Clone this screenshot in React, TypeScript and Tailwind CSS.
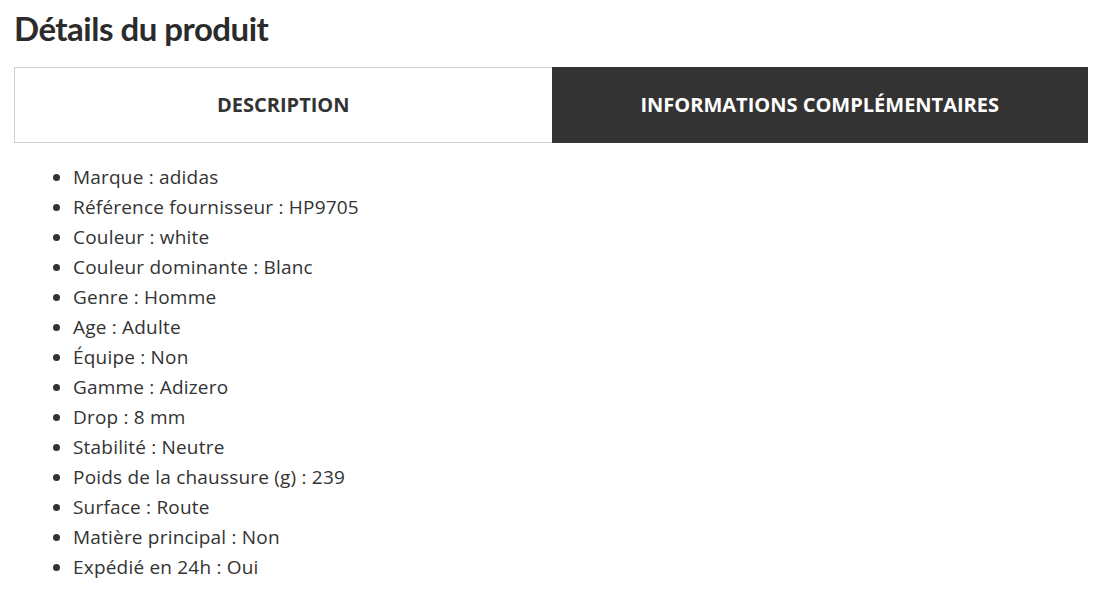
import React from "react";

const items = [
  "Marque : adidas",
  "Référence fournisseur : HP9705",
  "Couleur : white",
  "Couleur dominante : Blanc",
  "Genre : Homme",
  "Age : Adulte",
  "Équipe : Non",
  "Gamme : Adizero",
  "Drop : 8 mm",
  "Stabilité : Neutre",
  "Poids de la chaussure (g) : 239",
  "Surface : Route",
  "Matière principal : Non",
  "Expédié en 24h : Oui",
];

export default function App() {
  return (
    <div className="min-h-[591px] bg-white px-[14px] pt-[6px] text-[#333]">
      <h1 className="text-[33px] font-bold leading-[44px] tracking-[-0.5px] text-[#2b2b2b] font-['Lato',sans-serif]">Détails du produit</h1>
      <div className="mt-[17px] flex h-[76px] w-[1074px] font-['Open_Sans',sans-serif]">
        <div className="flex flex-1 items-center justify-center border border-r-0 border-[#d0d0d0] bg-white text-[20px] font-bold text-[#333]">
          DESCRIPTION
        </div>
        <div className="flex flex-1 items-center justify-center bg-[#333] text-[20px] font-bold text-white">
          INFORMATIONS COMPLÉMENTAIRES
        </div>
      </div>
      <ul className="mt-[19px] list-disc pl-[59px] text-[19px] leading-[30px] tracking-[0.2px] text-[#333] font-['Open_Sans',sans-serif]">
        {items.map((t) => (
          <li key={t}>{t}</li>
        ))}
      </ul>
    </div>
  );
}
